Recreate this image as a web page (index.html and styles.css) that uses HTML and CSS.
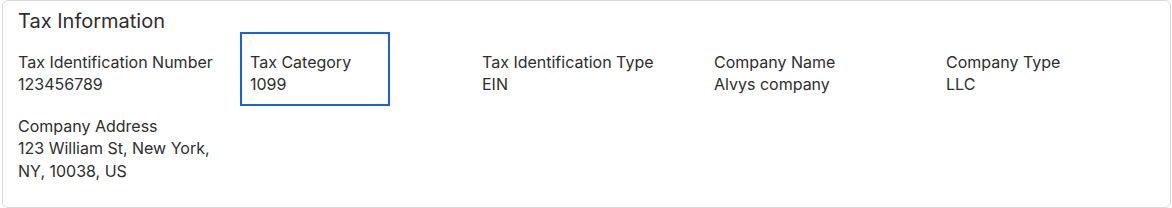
FILE: index.html
```html
<!DOCTYPE html>
<html lang="en">
<head>
    <meta charset="UTF-8">
    <meta name="viewport" content="width=device-width, initial-scale=1.0">
    <title>Tax Information</title>
    <link rel="stylesheet" href="styles.css">
</head>
<body>
    <div class="card">
        <h2 class="card-title">Tax Information</h2>
        <div class="fields">
            <div class="field">
                <div class="label">Tax Identification Number</div>
                <div class="value">123456789</div>
            </div>
            <div class="field focused">
                <div class="label">Tax Category</div>
                <div class="value">1099</div>
            </div>
            <div class="field">
                <div class="label">Tax Identification Type</div>
                <div class="value">EIN</div>
            </div>
            <div class="field">
                <div class="label">Company Name</div>
                <div class="value">Alvys company</div>
            </div>
            <div class="field">
                <div class="label">Company Type</div>
                <div class="value">LLC</div>
            </div>
            <div class="field">
                <div class="label">Company Address</div>
                <div class="value">123 William St, New York,<br>NY, 10038, US</div>
            </div>
        </div>
    </div>
</body>
</html>
```

FILE: styles.css
```css
body {
    margin: 0;
    padding: 0 1px 0 2px;
    font-family: Inter, "Noto Sans", sans-serif;
    color: #2e2e2e;
    background-color: #ffffff;
}

.card {
    border: 1px solid #d9d9d9;
    border-radius: 6px;
    padding: 8px 5px 14px;
    height: 208px;
    box-sizing: border-box;
}

.card-title {
    margin: 0 0 7px 10px;
    font-size: 20px;
    line-height: 24px;
    font-weight: 400;
}

.fields {
    display: grid;
    grid-template-columns: repeat(5, 232px);
}

.field {
    position: relative;
    justify-self: start;
    min-width: 130px;
    padding: 11px 10px 8px;
    font-size: 16px;
    line-height: 22px;
}

.value {
    line-height: 23px;
}

.field.focused::after {
    content: "";
    position: absolute;
    left: 0;
    right: 0;
    top: -8px;
    bottom: -2px;
    border: 2px solid #1a5fe6;
}
```
